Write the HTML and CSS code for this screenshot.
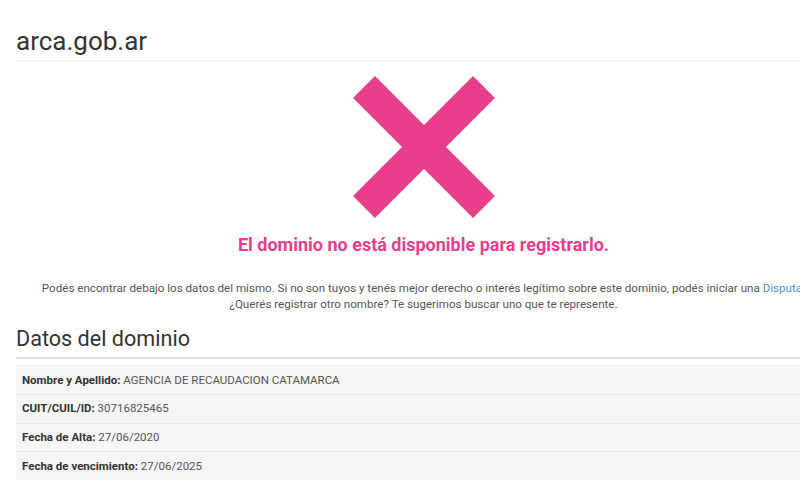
FILE: index.html
```html
<!DOCTYPE html>
<html lang="es">
<head>
<meta charset="utf-8">
<title>arca.gob.ar</title>
<link rel="stylesheet" href="styles.css">
</head>
<body>
<div class="page">
  <h1 class="domain">arca.gob.ar</h1>
  <div class="result">
    <svg class="cross" width="142" height="142" viewBox="0 0 142 142" aria-hidden="true">
      <line x1="11" y1="11" x2="131" y2="131" />
      <line x1="131" y1="11" x2="11" y2="131" />
    </svg>
    <h3 class="status">El dominio no está disponible para registrarlo.</h3>
    <p class="info">Podés encontrar debajo los datos del mismo. Si no son tuyos y tenés mejor derecho o interés legítimo sobre este dominio, podés iniciar una <a href="#">Disputa</a>.<br>¿Querés registrar otro nombre? Te sugerimos buscar uno que te represente.</p>
  </div>
  <h2 class="section">Datos del dominio</h2>
  <div class="data">
    <div class="row"><b>Nombre y Apellido:</b> AGENCIA DE RECAUDACION CATAMARCA</div>
    <div class="row"><b>CUIT/CUIL/ID:</b> 30716825465</div>
    <div class="row"><b>Fecha de Alta:</b> 27/06/2020</div>
    <div class="row"><b>Fecha de vencimiento:</b> 27/06/2025</div>
  </div>
</div>
</body>
</html>
```
FILE: styles.css
```css
html, body {
  margin: 0;
  padding: 0;
  background: #ffffff;
  overflow: hidden;
}
body {
  font-family: Roboto, "Liberation Sans", sans-serif;
  color: #333333;
}
.page {
  width: 815px;
  margin-left: 16px;
  padding-top: 24px;
}
.domain {
  margin: 0;
  font-size: 26px;
  font-weight: 400;
  line-height: 34px;
  color: #333333;
  padding-bottom: 2px;
  border-bottom: 1px solid #eeeeee;
}
.result {
  display: flex;
  flex-direction: column;
  align-items: center;
  text-align: center;
  padding-top: 15px;
}
.cross {
  display: block;
}
.cross line {
  stroke: #e83e8c;
  stroke-width: 31;
  stroke-linecap: butt;
}
.status {
  margin: 15px 0 0;
  font-size: 18px;
  font-weight: 700;
  line-height: 24px;
  color: #e83e8c;
}
.info {
  margin: 24px 0 0;
  font-size: 11.6px;
  line-height: 15.5px;
  color: #555555;
}
.info a {
  color: #4f8fc9;
  text-decoration: none;
}
.section {
  margin: 12px 0 0;
  font-size: 21.6px;
  font-weight: 400;
  line-height: 30px;
  color: #333333;
  padding-bottom: 3px;
  border-bottom: 2px solid #dddddd;
}
.data {
  margin-top: 6px;
  background: #f6f6f6;
}
.row {
  font-size: 11.5px;
  line-height: 17.25px;
  padding: 5.5px 6px 5px;
  color: #555555;
  border-top: 1px solid #e6e6e6;
}
.row:first-child {
  border-top-color: #eeeeee;
}
.row b {
  color: #333333;
  font-weight: 700;
}
```
